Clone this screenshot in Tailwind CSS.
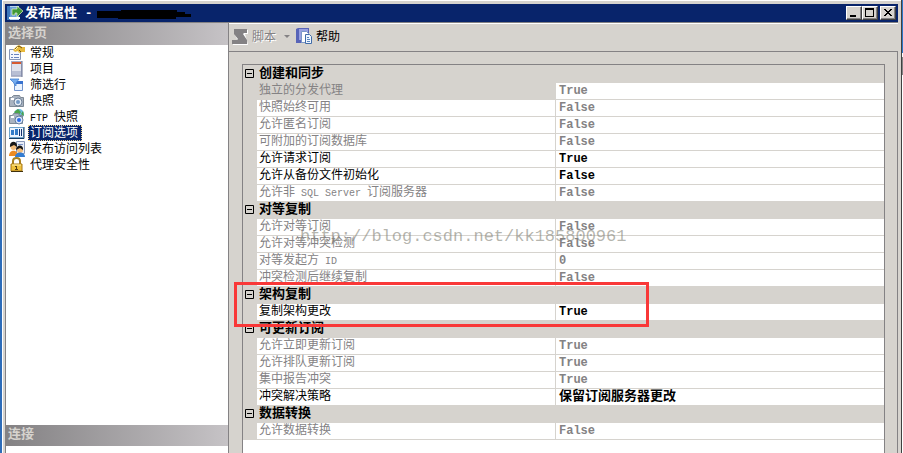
<!DOCTYPE html>
<html lang="zh-CN">
<head>
<meta charset="utf-8">
<title>发布属性</title>
<script src="https://cdn.jsdelivr.net/npm/@tailwindcss/browser@4"></script>
</head>
<body class="flex h-screen overflow-hidden bg-[#2e6cb8] pl-[2px] font-['Liberation_Sans','Noto_Sans_CJK_SC',sans-serif] text-xs leading-4 text-black">
<div class="flex min-w-0 flex-1 flex-col border-l border-white bg-[#d6d3ce] pt-1 pr-[3px] pl-[2px] shadow-[inset_0_1px_0_#fff]">
  <header class="flex h-[18px] shrink-0 items-center bg-[#08246b] pr-[2px] pl-[2px] text-white">
    <svg class="size-4 shrink-0" viewBox="0 0 16 16"><path d="M0 1h12v14H0z" fill="#b9d4f0"/><path d="M0 1h3v14H0z" fill="#3c78bc"/><path d="M3 2h9v10H3z" fill="#6ba0d8"/><path d="M2 12h11v2H2z" fill="#fff"/><path d="M5 4h5V1l6 5-6 6V8H8v2H5z" fill="#3f9838" stroke="#e8f4c0" stroke-width=".7"/></svg>
    <h1 class="ml-[2px] text-[13px] font-bold whitespace-pre">发布属性<span class="font-['Liberation_Mono',monospace]"> -</span></h1>
    <svg class="ml-[3px] h-3 w-24" viewBox="0 0 96 12"><path d="M1 4h24V3h56v2h8v2h6v3H80v2H22v-1H1z" fill="#000"/></svg>
    <div class="ml-auto flex h-[14px]">
      <button aria-label="最小化" class="w-4 border border-t-white border-r-[#404040] border-b-[#404040] border-l-white bg-[#d6d3ce] shadow-[inset_-1px_-1px_0_#848284]"><svg class="h-3 w-[14px]" viewBox="0 0 14 12"><path d="M3 8h6v2H3z"/></svg></button>
      <button aria-label="最大化" class="w-4 border border-t-white border-r-[#404040] border-b-[#404040] border-l-white bg-[#d6d3ce] shadow-[inset_-1px_-1px_0_#848284]"><svg class="h-3 w-[14px]" viewBox="0 0 14 12"><path d="M2 1h9v9H2zM3 3v6h7V3z" fill-rule="evenodd"/></svg></button>
      <button aria-label="关闭" class="ml-[2px] w-4 border border-t-white border-r-[#404040] border-b-[#404040] border-l-white bg-[#d6d3ce] shadow-[inset_-1px_-1px_0_#848284]"><svg class="h-3 w-[14px]" viewBox="0 0 14 12" shape-rendering="crispEdges"><path d="M3 2h2v1h1v1h2V3h1V2h2v1h-1v1H9v1H8v1h1v1h1v1h1v1H9V8H8V7H6v1H5v1H3V8h1V7h1V6h1V5H5V4H4V3H3z"/></svg></button>
    </div>
  </header>
  <div class="flex min-h-0 flex-1 border-t border-[#848284]">
    <aside class="flex w-[224px] shrink-0 flex-col border-r border-l border-[#848284] bg-white">
      <h2 class="h-[22px] shrink-0 bg-linear-to-r from-[#848284] to-[#c6c3c6] pt-[2px] pl-[2px] text-[13px] font-bold text-[#d6d3ce]">选择页</h2>
      <nav class="flex-1">
        <a href="#" class="flex h-4 items-center pl-[3px]"><svg class="mr-[3px] size-4" viewBox="0 0 16 16"><path d="M.5 4.500h11v10H.5z" fill="#f4f7fc" stroke="#8795b5"/><path d="M2 9.500h2M5 9.500h5M2 12.500h2M5 12.500h5" stroke="#6a84bd"/><path d="M4 5l4-4 2-1 3 2h3v5h-3l-3 1-1-2-3 1z" fill="#e8b93c"/><path d="M6 4l4-3 3 2M10 5l2 2" fill="none" stroke="#705418"/><path d="M6 5l3-3" stroke="#fff3a8"/></svg><span class="px-[2px]">常规</span></a>
        <a href="#" class="flex h-4 items-center pl-[3px]"><svg class="mr-[3px] size-4" viewBox="0 0 16 16"><path d="M2 0h11v15H2z" fill="#a4acc6"/><path d="M3 1h9v13H3z" fill="#dfe2ec"/><path d="M3 10h9v4H3z" fill="#b8bfd4"/><path d="M3 1h9v2H3z" fill="#d65a30"/><path d="M13 0v16H2" fill="none" stroke="#687090"/></svg><span class="px-[2px]">项目</span></a>
        <a href="#" class="flex h-4 items-center pl-[3px]"><svg class="mr-[3px] size-4" viewBox="0 0 16 16"><path d="M5.500 4.500h8v9h-8z" fill="#eaf3ff" stroke="#7193cb"/><path d="M5 4h9v3H5z" fill="#3973d0"/><path d="M1 2h9L7 6v3L5 7V6z" fill="#75acef" stroke="#4280d0" stroke-width=".8"/></svg><span class="px-[2px]">筛选行</span></a>
        <a href="#" class="flex h-4 items-center pl-[3px]"><svg class="mr-[3px] size-4" viewBox="0 0 16 16"><path d="M.5 4.500h2l2-2h6l1 2h3v9H.5z" fill="#a9b3c0" stroke="#7d8894"/><path d="M2 5h3v2H2z" fill="#fff"/><circle cx="9" cy="9" r="4" fill="#e6edf5" stroke="#6f8198"/><circle cx="9" cy="9" r="2" fill="#7399c5"/></svg><span class="px-[2px]">快照</span></a>
        <a href="#" class="flex h-4 items-center pl-[3px]"><svg class="mr-[3px] size-4" viewBox="0 0 16 16"><circle cx="10" cy="5" r="5" fill="#6ab8dc"/><path d="M5 3l4-3 3 3-3 4zM12 5l2-3 1 5z" fill="#4ba448"/><path d="M.5 6.500h3l1-2h5l1 2h3v8H.5z" fill="#a9b3c0" stroke="#7d8894"/><path d="M2 7h3v2H2z" fill="#fff"/><circle cx="10" cy="11" r="4" fill="#dce8f8" stroke="#627b9d"/><circle cx="10" cy="11" r="2" fill="#2869e8"/></svg><span class="px-[2px]"><span class="font-['Liberation_Mono',monospace] text-[10px] leading-none">FTP </span>快照</span></a>
        <a href="#" aria-current="page" class="flex h-4 items-center pl-[3px]"><svg class="mr-[3px] size-4" viewBox="0 0 16 16"><path d="M.5 2.500h14v10H.5z" fill="#eef5ff" stroke="#70a5cc"/><path d="M15 2v11.500H0" fill="none" stroke="#173e67"/><path d="M2 5h3v5H2zM6 4h3v6H6z" fill="#347cc7"/><path d="M10 4h1v7h-1zM12 4h1v7h-1z" fill="#17336d"/></svg><span class="bg-[#08246b] pr-1 pl-[2px] text-white outline-1 -outline-offset-1 outline-dotted outline-[#f4d890]">订阅选项</span></a>
        <a href="#" class="flex h-4 items-center pl-[3px]"><svg class="mr-[3px] size-4" viewBox="0 0 16 16"><path d="M7.500.5h8v12h-8z" fill="#e8edf7" stroke="#8797b8"/><path d="M9 3.500h5" stroke="#7b91c5"/><circle cx="4.500" cy="6" r="3" fill="#f3bd7b"/><path d="M1 6c-1-7 8-7 7 0L5 4z" fill="#171717"/><path d="M0 15c0-7 9-7 9 0z" fill="#ed8b22"/><circle cx="11" cy="9" r="3" fill="#f3bd7b"/><path d="M7 9c0-6 8-6 7 0l-3-2z" fill="#171717"/><path d="M6 16c0-6 10-6 10 0z" fill="#337cd2"/></svg><span class="px-[2px]">发布访问列表</span></a>
        <a href="#" class="flex h-4 items-center pl-[3px]"><svg class="mr-[3px] size-4" viewBox="0 0 16 16"><path d="M4 8V4c0-4 7-4 7 0v4" fill="none" stroke="#a88020" stroke-width="2"/><path d="M2 7h11v7H2z" fill="#efc13c" stroke="#a87818"/><path d="M3 8h9" stroke="#fff0a0"/><path d="M6 9h2v3h1v1H6v-1h1v-2H6z" fill="#584010"/><path d="M2 14.500h12" stroke="#40300c"/></svg><span class="px-[2px]">代理安全性</span></a>
      </nav>
      <h2 class="mb-[7px] h-[21px] shrink-0 bg-linear-to-r from-[#848284] to-[#c6c3c6] pt-[1px] pl-[2px] text-[13px] font-bold text-[#d6d3ce]">连接</h2>
    </aside>
    <main class="flex min-w-0 flex-1 flex-col border-t border-white">
      <div class="flex h-[27px] shrink-0 items-center pb-[2px] pl-[3px]">
        <button disabled class="flex items-center text-[#848284] [text-shadow:1px_1px_0_#fff]"><svg class="mr-[3px] h-4 w-[17px]" viewBox="0 0 17 16"><path d="M3 1h13v4h-3l2 7 1 4H1v-4h5L3 6z" fill="#fff"/><path d="M2 0h13v4h-3l-1 1 4 6v4H0v-4h5l1-1-4-5z" fill="#848284"/></svg>脚本<svg class="ml-2 h-[5px] w-[6px]" viewBox="0 0 6 5"><path d="M0 1h6L3 4z" fill="#848284"/></svg></button>
        <button class="ml-[6px] flex items-center"><svg class="mr-[3px] size-[17px]" viewBox="0 0 17 17"><path d="M0 1l2-1h11v13l-2 2H0z" fill="#5864b8"/><path d="M3 1h9v11H3z" fill="#98a0e0"/><path d="M5.500 3.500h5l2 2v9h-7z" fill="#fff" stroke="#7b98c8"/><path d="M9.500 6.500h4l2 2v7h-6z" fill="#edf5ff" stroke="#426da8"/><path d="M11 9.500h2M11 11.500h3M11 13.500h3" stroke="#5b86bd"/></svg>帮助</button>
      </div>
      <section class="min-h-0 flex-1 overflow-hidden border-t border-r border-[#848284] pt-3 pr-3 pl-[13px]">
        <div class="h-full border-t border-r border-l border-[#848284] bg-white">
          <table id="props" class="w-full table-fixed border-separate border-spacing-0 border-t border-[#d6d3ce] [&_td]:h-[17px] [&_td]:border-b [&_td]:border-[#d6d3ce] [&_td]:p-0 [&_td]:pl-[3px] [&_td]:font-['Liberation_Mono','Noto_Sans_CJK_SC',monospace] [&_td]:leading-[14px] [&_td]:font-bold [&_th]:h-[17px] [&_th]:border-b [&_th]:border-[#d6d3ce] [&_th]:p-0 [&_th]:pb-[2px] [&_th]:pl-[2px] [&_th]:text-left [&_th]:leading-[14px] [&_th]:whitespace-nowrap">
            <colgroup><col class="w-[14px]"><col class="w-[299px]"><col></colgroup>
            <tbody></tbody>
          </table>
        </div>
      </section>
    </main>
  </div>
</div>
<div class="flex w-[2px] shrink-0 flex-col border-l border-[#404040] bg-white"><div class="h-[53px] bg-[#2e78c8]"></div><div class="mt-1 h-[18px] bg-[#848284]"></div></div>
<div class="pointer-events-none absolute top-[282px] left-[234px] h-[45px] w-[415px] border-3 border-[#f93838]"></div>
<div class="pointer-events-none absolute top-[227px] left-[300px] font-['Liberation_Mono',monospace] text-[17px] leading-5 text-[#848478]/60">http://blog.csdn.net/kk185800961</div>
<script>
const groups = [
  ['创建和同步', [['独立的分发代理','True'],['快照始终可用','False'],['允许匿名订阅','False'],['可附加的订阅数据库','False'],['允许请求订阅','True',1],['允许从备份文件初始化','False',1],['允许非 SQL Server 订阅服务器','False']]],
  ['对等复制', [['允许对等订阅','False'],['允许对等冲突检测','False'],['对等发起方 ID','0'],['冲突检测后继续复制','False']]],
  ['架构复制', [['复制架构更改','True',1]]],
  ['可更新订阅', [['允许立即更新订阅','True'],['允许排队更新订阅','True'],['集中报告冲突','True'],['冲突解决策略','保留订阅服务器更改',1]]],
  ['数据转换', [['允许数据转换','False']]]
];
const latin = s => s.replace(/ ?[A-Z][A-Za-z ]*/g, m => `<span class="font-['Liberation_Mono',monospace] text-[10px] leading-none">${m}</span>`);
let html = '';
groups.forEach(([title, rows], g) => {
  html += `<tr class="bg-[#d6d3ce]"><th><button class="block" aria-label="折叠"><svg class="size-[9px]" viewBox="0 0 9 9"><path d="M.5.5h8v8h-8zM2 4.500h5" fill="none" stroke="#000"/></svg></button></th><th colspan="2" class="text-[13px] font-bold">${title}</th></tr>`;
  rows.forEach(([label, value, on], r) => {
    const selected = g === 0 && r === 0;
    const size = /[A-Z0]/.test(value) ? 'text-xs' : 'text-[13px]';
    html += `<tr class="${on ? 'text-black' : 'text-[#848284]'}"><th class="bg-[#d6d3ce]"></th><th class="border-r font-normal ${selected ? 'bg-[#d6d3ce]' : ''}">${latin(label)}</th><td class="${size}">${value}</td></tr>`;
  });
});
document.querySelector('#props tbody').innerHTML = html;
</script>
</body>
</html>
